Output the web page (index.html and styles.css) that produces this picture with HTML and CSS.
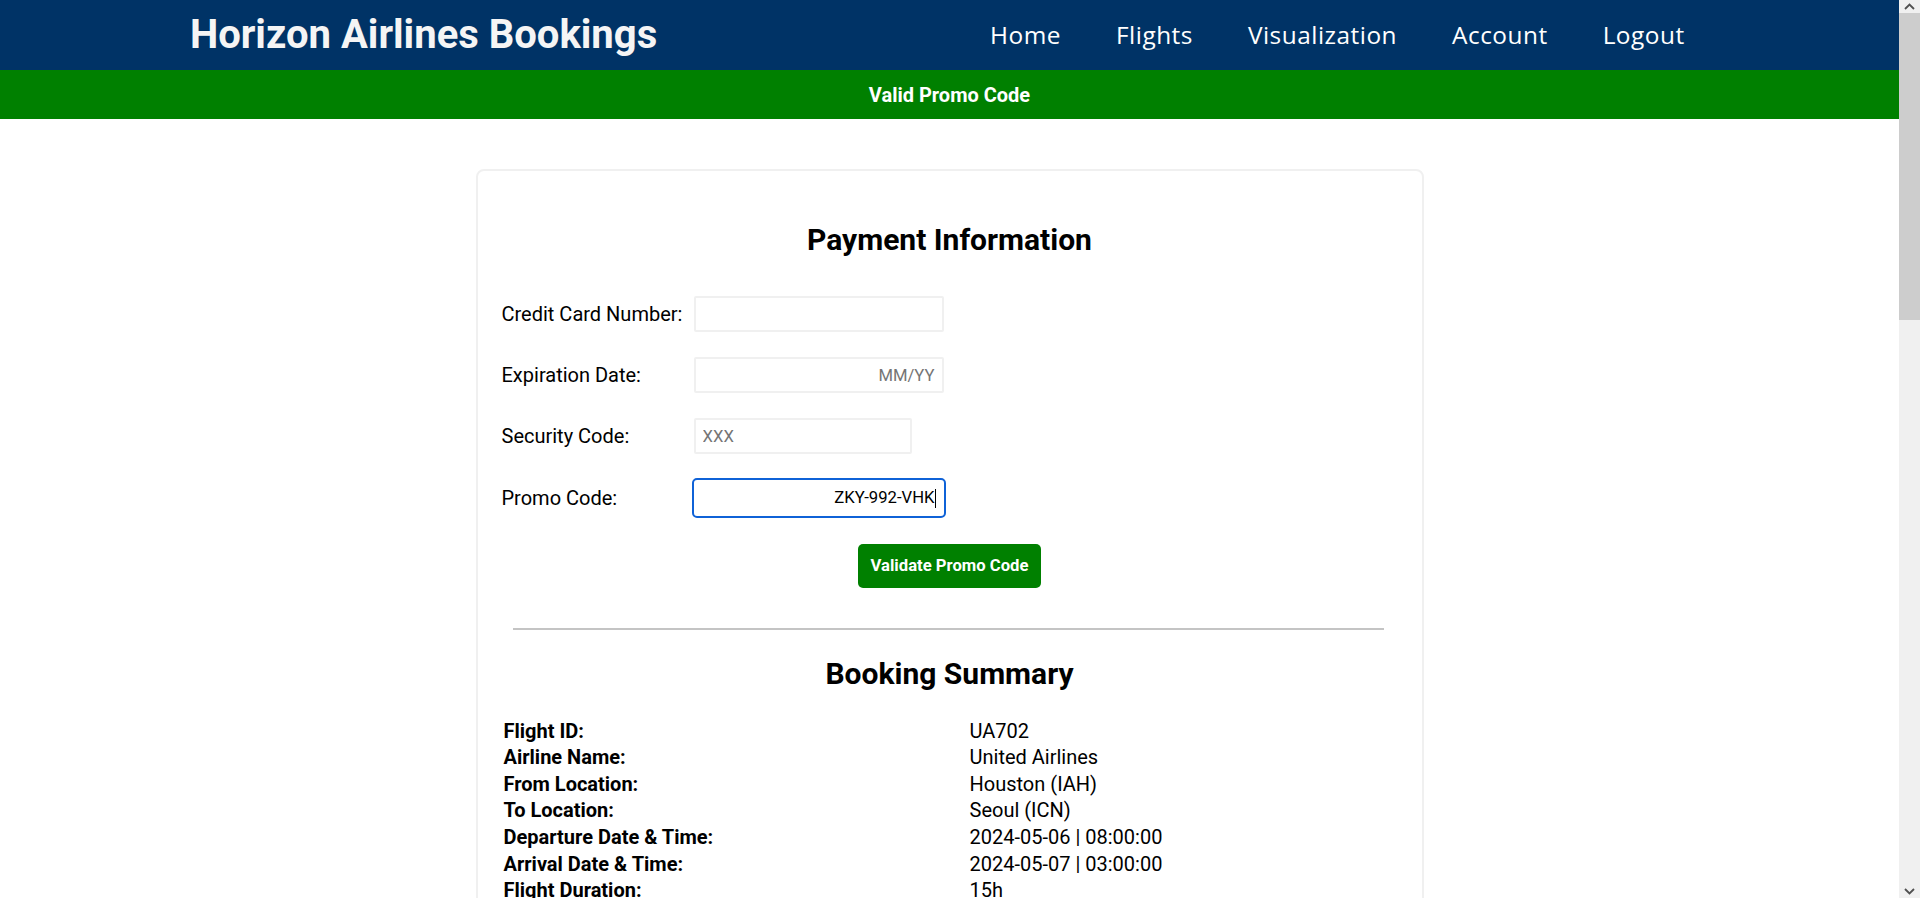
FILE: index.html
```html
<!DOCTYPE html>
<html lang="en">
<head>
<meta charset="utf-8">
<title>Horizon Airlines Bookings - Payment</title>
<link rel="stylesheet" href="styles.css">
</head>
<body>
<div class="viewport">
  <div class="page">
    <header class="topbar">
      <div class="brand">Horizon Airlines Bookings</div>
      <nav class="nav">
        <a class="nav-link" href="#">Home</a>
        <a class="nav-link" href="#">Flights</a>
        <a class="nav-link" href="#">Visualization</a>
        <a class="nav-link" href="#">Account</a>
        <a class="nav-link" href="#">Logout</a>
      </nav>
    </header>
    <div class="banner">Valid Promo Code</div>

    <main class="card">
      <h2 class="section-title">Payment Information</h2>
      <form class="pay-form">
        <div class="field">
          <label class="field-label" for="cc">Credit Card Number:</label>
          <input class="field-input align-right" id="cc" type="text">
        </div>
        <div class="field">
          <label class="field-label" for="exp">Expiration Date:</label>
          <input class="field-input align-right" id="exp" type="text" placeholder="MM/YY">
        </div>
        <div class="field">
          <label class="field-label" for="cvv">Security Code:</label>
          <input class="field-input narrow" id="cvv" type="text" placeholder="XXX">
        </div>
        <div class="field">
          <label class="field-label" for="promo">Promo Code:</label>
          <div class="focus-wrap">
            <input class="field-input align-right is-focused" id="promo" type="text" value="ZKY-992-VHK">
            <span class="caret"></span>
          </div>
        </div>
        <div class="actions">
          <button class="btn" type="button">Validate Promo Code</button>
        </div>
      </form>

      <hr class="divider">

      <h2 class="section-title">Booking Summary</h2>
      <div class="summary">
        <div class="summary-label">Flight ID:</div><div class="summary-value">UA702</div>
        <div class="summary-label">Airline Name:</div><div class="summary-value">United Airlines</div>
        <div class="summary-label">From Location:</div><div class="summary-value">Houston (IAH)</div>
        <div class="summary-label">To Location:</div><div class="summary-value">Seoul (ICN)</div>
        <div class="summary-label">Departure Date &amp; Time:</div><div class="summary-value">2024-05-06 | 08:00:00</div>
        <div class="summary-label">Arrival Date &amp; Time:</div><div class="summary-value">2024-05-07 | 03:00:00</div>
        <div class="summary-label">Flight Duration:</div><div class="summary-value">15h</div>
        <div class="summary-label">Number of Stops:</div><div class="summary-value">0</div>
        <div class="summary-label">Seat Class:</div><div class="summary-value">Economy</div>
        <div class="summary-label">Number of Passengers:</div><div class="summary-value">1</div>
        <div class="summary-label">Base Fare:</div><div class="summary-value">$1,245.00</div>
        <div class="summary-label">Taxes &amp; Fees:</div><div class="summary-value">$112.05</div>
        <div class="summary-label">Promo Discount:</div><div class="summary-value">-$135.71</div>
        <div class="summary-label">Total Price:</div><div class="summary-value">$1,221.34</div>
      </div>

      <div class="actions confirm">
        <button class="btn" type="button">Confirm Booking</button>
      </div>
    </main>
  </div>

  <div class="scrollbar" aria-hidden="true">
    <div class="sb-btn">
      <svg class="sb-icon" width="11" height="7" viewBox="0 0 11 7"><path d="M1 6 L5.5 1.5 L10 6" fill="none" stroke="#505050" stroke-width="1.8"/></svg>
    </div>
    <div class="sb-thumb"></div>
    <div class="sb-track"></div>
    <div class="sb-btn">
      <svg class="sb-icon" width="11" height="7" viewBox="0 0 11 7"><path d="M1 1 L5.5 5.5 L10 1" fill="none" stroke="#505050" stroke-width="1.8"/></svg>
    </div>
  </div>
</div>
</body>
</html>
```

FILE: styles.css
```css
body {
  margin: 0;
  font-family: Roboto, "Liberation Sans", Arial, sans-serif;
  color: #000000;
  background: #ffffff;
}

/* ---------- window frame with scrollbar ---------- */
.viewport {
  display: flex;
  height: 100vh;
  overflow: hidden;
}

.page {
  flex: 1;
  min-width: 0;
  overflow-y: auto;
  scrollbar-width: none;
}

.page::-webkit-scrollbar {
  display: none;
}

.scrollbar {
  flex: none;
  width: 21px;
  background: #f0f0f0;
  display: flex;
  flex-direction: column;
}

.sb-btn {
  height: 13px;
  display: flex;
  align-items: center;
  justify-content: center;
  flex: none;
}

.sb-icon {
  display: block;
}

.sb-thumb {
  height: 307px;
  background: #cdcdcd;
  flex: none;
}

.sb-track {
  flex: 1;
}

/* ---------- top bar ---------- */
.topbar {
  height: 70px;
  background: #003366;
  display: flex;
  align-items: center;
  justify-content: space-between;
  padding: 0 10%;
}

.brand {
  font-weight: 700;
  font-size: 40px;
  color: #f5f5f5;
  margin-top: -2px;
}

.nav {
  display: flex;
  align-items: center;
  margin-right: -3px;
}

.nav-link {
  font-family: "Open Sans", "DejaVu Sans", sans-serif;
  font-size: 24.4px;
  letter-spacing: 0.5px;
  color: #ffffff;
  text-decoration: none;
  padding: 0 27.5px;
  margin-top: -2px;
}

/* ---------- status banner ---------- */
.banner {
  height: 49px;
  background: #008000;
  color: #ffffff;
  font-weight: 700;
  font-size: 20px;
  display: flex;
  align-items: center;
  justify-content: center;
}

/* ---------- card ---------- */
.card {
  display: block;
  box-sizing: border-box;
  max-width: 948px;
  margin: 50px auto 50px;
  border: 2px solid #f0f0f0;
  border-radius: 8px;
  padding: 51px 24px 44px;
}

.section-title {
  margin: 0;
  font-size: 30px;
  font-weight: 700;
  text-align: center;
}

.pay-form {
  margin-top: 38.8px;
  display: flex;
  flex-direction: column;
  gap: 25.33px;
}

.field {
  display: flex;
  align-items: center;
  height: 36px;
}

.field-label {
  width: 192px;
  flex: none;
  font-size: 20px;
}

.field-input {
  box-sizing: border-box;
  width: 250px;
  height: 36px;
  border: 2px solid #f0f0f0;
  border-radius: 2px;
  padding: 0 7px;
  font-family: Roboto, "Liberation Sans", sans-serif;
  font-size: 16.67px;
  color: #000000;
  background: #ffffff;
  outline: none;
}

.field-input::placeholder {
  color: #757575;
}

.align-right {
  text-align: right;
}

.narrow {
  width: 218px;
}

.focus-wrap {
  position: relative;
  display: flex;
}

.is-focused {
  border-color: #ffffff;
  outline: 2px solid #0f62d7;
  outline-offset: 0;
  border-radius: 3px;
}

.caret {
  position: absolute;
  right: 8px;
  top: 9px;
  width: 1px;
  height: 19px;
  background: #000000;
}

.actions {
  display: flex;
  justify-content: center;
  margin-top: 2.7px;
}

.confirm {
  margin-top: 40px;
}

.btn {
  height: 44px;
  padding: 0 12.5px;
  border: none;
  border-radius: 5px;
  background: #008000;
  color: #ffffff;
  font-family: Roboto, "Liberation Sans", sans-serif;
  font-weight: 700;
  font-size: 16.67px;
  cursor: pointer;
}

.divider {
  margin: 40px 14px 26px 11px;
  border: none;
  border-top: 2px solid #c4c4c4;
  height: 0;
}

/* ---------- summary ---------- */
.summary {
  margin-top: 27px;
  padding-left: 2px;
  display: grid;
  grid-template-columns: 466px 1fr;
  font-size: 20px;
  line-height: 26.55px;
}

.summary-label {
  font-weight: 700;
}
```
